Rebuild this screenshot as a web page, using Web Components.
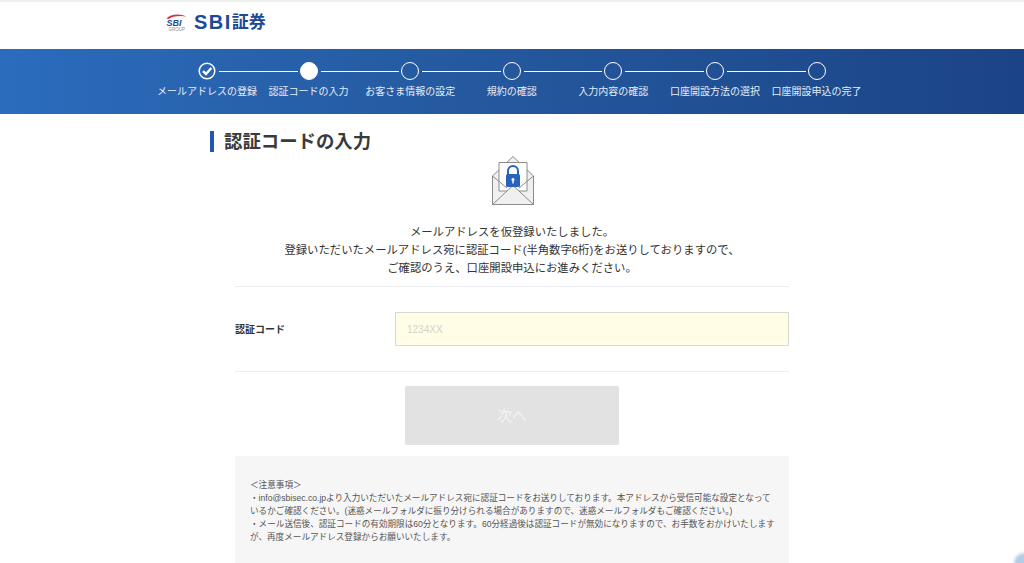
<!DOCTYPE html>
<html lang="ja">
<head>
<meta charset="utf-8">
<title>認証コードの入力</title>
<style>
  html, body { margin: 0; padding: 0; background: #fff; }
  body {
    width: 1024px;
    height: 563px;
    overflow: hidden;
    position: relative;
    font-family: "Liberation Sans", "Noto Sans CJK JP", sans-serif;
    color: #333;
  }
  .corner {
    position: absolute;
    right: -10px;
    bottom: -10px;
    width: 20px;
    height: 20px;
    border-radius: 50%;
    background: #b4cbe6;
    filter: blur(1.5px);
  }
</style>
</head>
<body>
<site-header></site-header>
<step-bar>
  <step-item state="done" label="メールアドレスの登録"></step-item>
  <step-item state="current" label="認証コードの入力"></step-item>
  <step-item label="お客さま情報の設定"></step-item>
  <step-item label="規約の確認"></step-item>
  <step-item label="入力内容の確認"></step-item>
  <step-item label="口座開設方法の選択"></step-item>
  <step-item last label="口座開設申込の完了"></step-item>
</step-bar>
<code-page>
  <span slot="title">認証コードの入力</span>
  <mail-lock slot="icon"></mail-lock>
  <span slot="lead">メールアドレスを仮登録いたしました。<br>登録いただいたメールアドレス宛に認証コード(半角数字6桁)をお送りしておりますので、<br>ご確認のうえ、口座開設申込にお進みください。</span>
  <code-field slot="field" label="認証コード" placeholder="1234XX"></code-field>
  <next-button slot="action">次へ</next-button>
  <notice-box slot="notice">＜注意事項＞<br>・info@sbisec.co.jpより入力いただいたメールアドレス宛に認証コードをお送りしております。本アドレスから受信可能な設定となって<br>いるかご確認ください。(迷惑メールフォルダに振り分けられる場合がありますので、迷惑メールフォルダもご確認ください。)<br>・メール送信後、認証コードの有効期限は60分となります。60分経過後は認証コードが無効になりますので、お手数をおかけいたします<br>が、再度メールアドレス登録からお願いいたします。</notice-box>
</code-page>
<div class="corner"></div>

<script>
class SiteHeader extends HTMLElement {
  constructor() {
    super();
    this.attachShadow({ mode: "open" });
    this.shadowRoot.innerHTML = `
      <style>
        :host {
          display: flex;
          align-items: flex-start;
          gap: 7px;
          height: 36px;
          padding: 11px 0 0 166px;
          border-top: 2px solid #efefef;
          background: #fff;
        }
        .mark { display: block; flex: none; }
        .name {
          display: flex;
          align-items: center;
          height: 18px;
          color: #1c4a94;
          font-weight: 700;
          line-height: 1;
        }
        .sbi { font-size: 20px; letter-spacing: 1.500px; }
        .sec { font-size: 17px; }
      </style>
      <svg class="mark" width="21" height="20" viewBox="0 0 21 20">
        <path d="M0.500 5.500 C4 1 14 0 20.500 3.500 C14 2.300 6 3 2.500 6 Z" fill="#d8343a"/>
        <text x="0.500" y="12.500" font-family="Liberation Sans" font-size="9" font-weight="700" font-style="italic" fill="#1c4a94">SBI</text>
        <text x="2.500" y="18" font-family="Liberation Sans" font-size="4.500" fill="#8a8a8a">GROUP</text>
      </svg>
      <span class="name"><span class="sbi">SBI</span><span class="sec">証券</span></span>
    `;
  }
}

class StepBar extends HTMLElement {
  constructor() {
    super();
    this.attachShadow({ mode: "open" });
    this.shadowRoot.innerHTML = `
      <style>
        :host {
          display: flex;
          height: 65px;
          padding-left: 207px;
          background: linear-gradient(90deg, #2b6cbd 0%, #25599f 45%, #1b4486 100%);
        }
      </style>
      <slot></slot>
    `;
  }
}

class StepItem extends HTMLElement {
  constructor() {
    super();
    this.attachShadow({ mode: "open" });
    const state = this.getAttribute("state");
    const check = state === "done"
      ? `<svg width="18" height="18" viewBox="0 0 18 18"><circle cx="9" cy="9" r="7.800" fill="none" stroke="#fff" stroke-width="1.500"/><path d="M5 9.200 L8 12 L13.300 6" fill="none" stroke="#fff" stroke-width="2.400"/></svg>`
      : `<span class="dot"></span>`;
    this.shadowRoot.innerHTML = `
      <style>
        :host {
          display: block;
          position: relative;
          width: 101.600px;
          height: 65px;
        }
        :host([last]) { width: 18px; }
        .node {
          position: absolute;
          left: -9px;
          top: 13px;
          width: 18px;
          height: 18px;
          display: block;
        }
        .node svg { display: block; }
        .dot {
          display: block;
          box-sizing: border-box;
          width: 18px;
          height: 18px;
          border-radius: 50%;
          border: 1.500px solid #fff;
        }
        :host([state="current"]) .dot { background: #fff; }
        .line {
          position: absolute;
          left: 12px;
          right: 11px;
          top: 21.500px;
          height: 1.500px;
          background: #fff;
        }
        :host([last]) .line { display: none; }
        .label {
          position: absolute;
          left: -60px;
          width: 120px;
          top: 35px;
          text-align: center;
          font-size: 10px;
          line-height: 15px;
          color: #e6edf6;
          white-space: nowrap;
        }
      </style>
      <span class="node">${check}</span>
      <span class="line"></span>
      <span class="label">${this.getAttribute("label")}</span>
    `;
  }
}

class CodePage extends HTMLElement {
  constructor() {
    super();
    this.attachShadow({ mode: "open" });
    this.shadowRoot.innerHTML = `
      <style>
        :host { display: block; width: 580px; margin-left: 210px; padding-top: 17px; }
        h1 {
          margin: 0;
          height: 21px;
          padding-left: 10px;
          border-left: 4px solid #2356ae;
          font-size: 18.400px;
          line-height: 21px;
          font-weight: 700;
          color: #3a3a3a;
        }
        .body { margin-left: 25px; width: 554px; }
        .icon { display: flex; justify-content: center; padding: 3px 0 0 2px; height: 52px; }
        .lead {
          margin-top: 16px;
          padding-bottom: 9px;
          border-bottom: 1px solid #e9edf2;
          text-align: center;
          font-size: 11.350px;
          line-height: 18px;
          color: #333;
        }
        .field {
          padding: 25px 0;
          border-bottom: 1px solid #ececec;
        }
        .action { display: flex; justify-content: center; padding-top: 14px; }
        .notice { margin-top: 11px; }
      </style>
      <h1><slot name="title"></slot></h1>
      <div class="body">
        <div class="icon"><slot name="icon"></slot></div>
        <div class="lead"><slot name="lead"></slot></div>
        <div class="field"><slot name="field"></slot></div>
        <div class="action"><slot name="action"></slot></div>
        <div class="notice"><slot name="notice"></slot></div>
      </div>
    `;
  }
}

class MailLock extends HTMLElement {
  constructor() {
    super();
    this.attachShadow({ mode: "open" });
    this.shadowRoot.innerHTML = `
      <style>:host { display: block; width: 44px; height: 52px; } svg { display: block; }</style>
      <svg width="44" height="52" viewBox="0 0 44 52">
        <path d="M1.500 21 L22 1.500 L42.500 21 V49.500 H1.500 Z" fill="#f0f0f0" stroke="#8c8c8c" stroke-width="1"/>
        <path d="M8 7.500 H36 V36 H8 Z" fill="#fff" stroke="#8c8c8c" stroke-width="1"/>
        <path d="M1.500 21 L16 33 M42.500 21 L28 33" fill="none" stroke="#8c8c8c" stroke-width="1"/>
        <path d="M1.500 49.500 L22 30.500 L42.500 49.500 Z" fill="#f0f0f0" stroke="#8c8c8c" stroke-width="1"/>
        <path d="M17 20 V16 A5 5 0 0 1 27 16 V20" fill="none" stroke="#2763bd" stroke-width="2"/>
        <rect x="15" y="19" width="14" height="13" rx="1.500" fill="#2763bd"/>
        <circle cx="22" cy="24.500" r="1.500" fill="#fff"/>
        <rect x="21.300" y="25" width="1.400" height="3.500" fill="#fff"/>
      </svg>
    `;
  }
}

class CodeField extends HTMLElement {
  constructor() {
    super();
    this.attachShadow({ mode: "open" });
    this.shadowRoot.innerHTML = `
      <style>
        :host { display: flex; align-items: center; height: 34px; }
        label { width: 160px; padding-bottom: 2px; font-size: 10px; font-weight: 700; color: #333; }
        input {
          flex: 1;
          min-width: 0;
          height: 34px;
          box-sizing: border-box;
          padding: 0 11px;
          border: 1px solid #d9d9cf;
          border-radius: 0;
          background: #fffde6;
          font: 10px "Liberation Sans", sans-serif;
          outline: none;
        }
        input::placeholder { color: #d2d2ca; opacity: 1; }
      </style>
      <label>${this.getAttribute("label")}</label>
      <input type="text" placeholder="${this.getAttribute("placeholder")}">
    `;
  }
}

class NextButton extends HTMLElement {
  constructor() {
    super();
    this.attachShadow({ mode: "open" });
    this.shadowRoot.innerHTML = `
      <style>
        :host {
          display: flex;
          align-items: center;
          justify-content: center;
          box-sizing: border-box;
          width: 214px;
          height: 59px;
          padding-bottom: 3px;
          border-radius: 2px;
          background: #e2e2e2;
          color: #f4f4f4;
          font-size: 15px;
        }
      </style>
      <slot></slot>
    `;
  }
}

class NoticeBox extends HTMLElement {
  constructor() {
    super();
    this.attachShadow({ mode: "open" });
    this.shadowRoot.innerHTML = `
      <style>
        :host {
          display: block;
          box-sizing: border-box;
          height: 107px;
          padding: 23px 15px 0;
          background: #f6f6f6;
          font-size: 8.600px;
          line-height: 13px;
          color: #555;
          white-space: nowrap;
        }
      </style>
      <slot></slot>
    `;
  }
}

customElements.define("site-header", SiteHeader);
customElements.define("step-bar", StepBar);
customElements.define("step-item", StepItem);
customElements.define("code-page", CodePage);
customElements.define("mail-lock", MailLock);
customElements.define("code-field", CodeField);
customElements.define("next-button", NextButton);
customElements.define("notice-box", NoticeBox);
</script>
</body>
</html>
